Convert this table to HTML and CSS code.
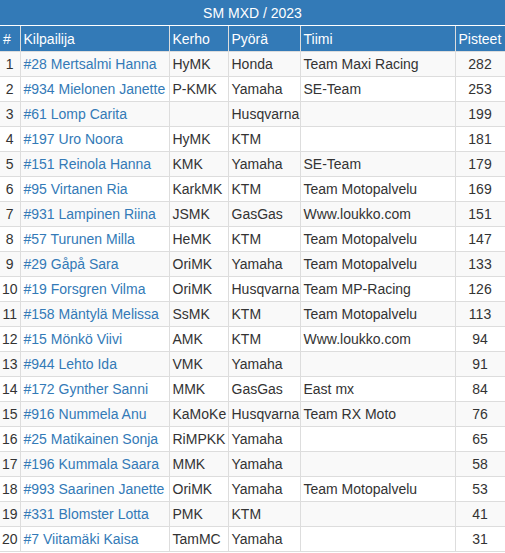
FILE: index.html
```html
<!DOCTYPE html>
<html lang="fi">
<head>
<meta charset="utf-8">
<title>SM MXD / 2023</title>
<link rel="stylesheet" href="styles.css">
</head>
<body>
<table class="results">
  <colgroup>
    <col class="c-pos"><col class="c-name"><col class="c-club"><col class="c-bike"><col class="c-team"><col class="c-pts">
  </colgroup>
  <thead>
    <tr class="title-row"><th colspan="6">SM MXD / 2023</th></tr>
    <tr class="head-row"><th>#</th><th>Kilpailija</th><th>Kerho</th><th>Pyörä</th><th>Tiimi</th><th>Pisteet</th></tr>
  </thead>
  <tbody>
    <tr><td class="pos">1</td><td><a href="#">#28 Mertsalmi Hanna</a></td><td>HyMK</td><td>Honda</td><td>Team Maxi Racing</td><td class="pts">282</td></tr>
    <tr><td class="pos">2</td><td><a href="#">#934 Mielonen Janette</a></td><td>P-KMK</td><td>Yamaha</td><td>SE-Team</td><td class="pts">253</td></tr>
    <tr><td class="pos">3</td><td><a href="#">#61 Lomp Carita</a></td><td></td><td>Husqvarna</td><td></td><td class="pts">199</td></tr>
    <tr><td class="pos">4</td><td><a href="#">#197 Uro Noora</a></td><td>HyMK</td><td>KTM</td><td></td><td class="pts">181</td></tr>
    <tr><td class="pos">5</td><td><a href="#">#151 Reinola Hanna</a></td><td>KMK</td><td>Yamaha</td><td>SE-Team</td><td class="pts">179</td></tr>
    <tr><td class="pos">6</td><td><a href="#">#95 Virtanen Ria</a></td><td>KarkMK</td><td>KTM</td><td>Team Motopalvelu</td><td class="pts">169</td></tr>
    <tr><td class="pos">7</td><td><a href="#">#931 Lampinen Riina</a></td><td>JSMK</td><td>GasGas</td><td>Www.loukko.com</td><td class="pts">151</td></tr>
    <tr><td class="pos">8</td><td><a href="#">#57 Turunen Milla</a></td><td>HeMK</td><td>KTM</td><td>Team Motopalvelu</td><td class="pts">147</td></tr>
    <tr><td class="pos">9</td><td><a href="#">#29 Gåpå Sara</a></td><td>OriMK</td><td>Yamaha</td><td>Team Motopalvelu</td><td class="pts">133</td></tr>
    <tr><td class="pos">10</td><td><a href="#">#19 Forsgren Vilma</a></td><td>OriMK</td><td>Husqvarna</td><td>Team MP-Racing</td><td class="pts">126</td></tr>
    <tr><td class="pos">11</td><td><a href="#">#158 Mäntylä Melissa</a></td><td>SsMK</td><td>KTM</td><td>Team Motopalvelu</td><td class="pts">113</td></tr>
    <tr><td class="pos">12</td><td><a href="#">#15 Mönkö Viivi</a></td><td>AMK</td><td>KTM</td><td>Www.loukko.com</td><td class="pts">94</td></tr>
    <tr><td class="pos">13</td><td><a href="#">#944 Lehto Ida</a></td><td>VMK</td><td>Yamaha</td><td></td><td class="pts">91</td></tr>
    <tr><td class="pos">14</td><td><a href="#">#172 Gynther Sanni</a></td><td>MMK</td><td>GasGas</td><td>East mx</td><td class="pts">84</td></tr>
    <tr><td class="pos">15</td><td><a href="#">#916 Nummela Anu</a></td><td>KaMoKe</td><td>Husqvarna</td><td>Team RX Moto</td><td class="pts">76</td></tr>
    <tr><td class="pos">16</td><td><a href="#">#25 Matikainen Sonja</a></td><td>RiMPKK</td><td>Yamaha</td><td></td><td class="pts">65</td></tr>
    <tr><td class="pos">17</td><td><a href="#">#196 Kummala Saara</a></td><td>MMK</td><td>Yamaha</td><td></td><td class="pts">58</td></tr>
    <tr><td class="pos">18</td><td><a href="#">#993 Saarinen Janette</a></td><td>OriMK</td><td>Yamaha</td><td>Team Motopalvelu</td><td class="pts">53</td></tr>
    <tr><td class="pos">19</td><td><a href="#">#331 Blomster Lotta</a></td><td>PMK</td><td>KTM</td><td></td><td class="pts">41</td></tr>
    <tr><td class="pos">20</td><td><a href="#">#7 Viitamäki Kaisa</a></td><td>TamMC</td><td>Yamaha</td><td></td><td class="pts">31</td></tr>
  </tbody>
</table>
</body>
</html>
```

FILE: styles.css
```css
html, body {
  margin: 0;
  padding: 0;
  background: #fff;
}
body {
  font-family: "Liberation Sans", Arial, sans-serif;
  font-size: 14px;
  line-height: 20px;
  color: #333;
}
.results {
  width: 505px;
  border-collapse: collapse;
  table-layout: fixed;
}
.c-pos { width: 20px; }
.c-name { width: 149px; }
.c-club { width: 59px; }
.c-bike { width: 72px; }
.c-team { width: 155px; }
.c-pts { width: 50px; }

.results th,
.results td {
  padding: 2px 3px;
  line-height: 20px;
  white-space: nowrap;
  overflow: hidden;
  vertical-align: middle;
}
.title-row th {
  background: #337ab7;
  color: #fff;
  font-weight: normal;
  text-align: center;
  padding: 3px 3px 2px;
  border-bottom: 1px solid #fff;
}
.head-row th {
  background: #337ab7;
  color: #fff;
  font-weight: normal;
  text-align: left;
  padding: 3px 3px 2px;
  border: 1px solid #ddd;
  border-top: none;
}
.head-row th:first-child { border-left: none; }
.results td {
  border: 1px solid #ddd;
}
.results td:first-child { border-left: none; }
.results tbody tr:nth-child(odd) td { background: #f9f9f9; }
.results td.pos {
  text-align: center;
  padding: 2px 1px;
}
.results td.pts { text-align: center; }
.results a {
  color: #337ab7;
  text-decoration: none;
}
```
